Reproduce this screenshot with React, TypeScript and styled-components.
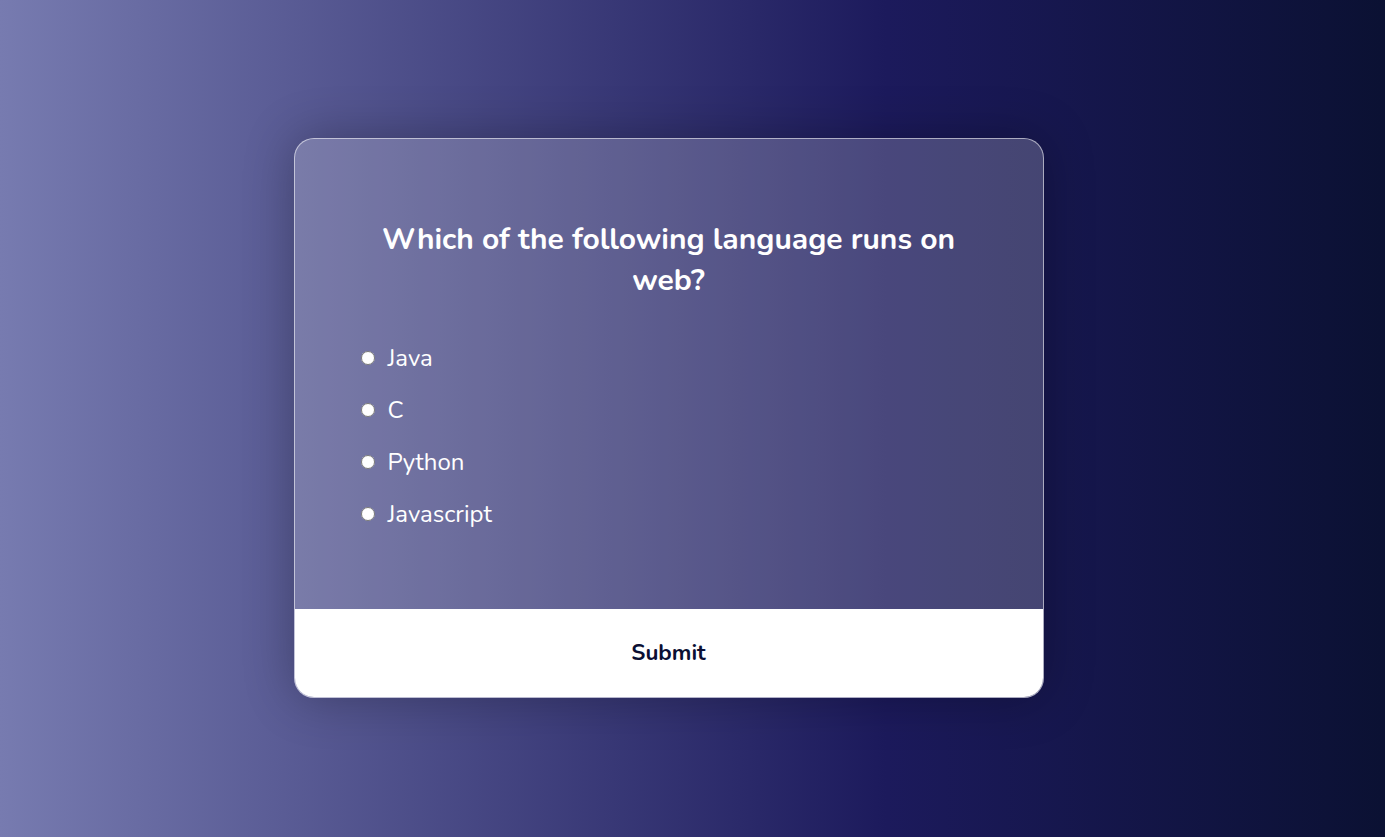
import React, { useState } from "react";
import styled, { createGlobalStyle } from "styled-components";

const GlobalStyle = createGlobalStyle`
  * { box-sizing: border-box; }
  html, body { margin: 0; padding: 0; }
  body {
    font-family: "Nunito", "Lato", "Noto Sans", sans-serif;
    background: linear-gradient(90deg, #777bb0 0%, #1c1a5c 64%, #0b1133 100%);
    min-height: 100vh;
  }
`;

const Page = styled.main`
  min-height: 100vh;
  display: flex;
  align-items: center;
  justify-content: center;
  padding: 0 48px 1px 0;
`;

const Card = styled.section`
  width: 750px;
  height: 560px;
  border-radius: 20px;
  border: 1px solid rgba(255, 255, 255, 0.55);
  background: rgba(255, 255, 255, 0.2);
  box-shadow: 0 0 50px rgba(0, 0, 0, 0.28);
  overflow: hidden;
  display: flex;
  flex-direction: column;
  color: #fff;
`;

const Body = styled.div`
  flex: 1;
  padding: 80px 64px 0;
`;

const Question = styled.h2`
  margin: 0 0 31px;
  text-align: center;
  font-size: 30px;
  font-weight: 700;
  line-height: 41px;
  color: #fff;
`;

const Options = styled.ul`
  list-style: none;
  margin: 0;
  padding: 0;
  display: flex;
  flex-direction: column;
`;

const Option = styled.li`
  height: 52px;
  display: flex;
  align-items: center;
  font-size: 24px;
`;

const Label = styled.label`
  display: flex;
  align-items: center;
  cursor: pointer;
`;

const Radio = styled.input`
  width: 14px;
  height: 14px;
  margin: 0 13px 0 2px;
`;

const SubmitButton = styled.button`
  height: 88px;
  flex-shrink: 0;
  width: 100%;
  border: none;
  background: #fff;
  color: #0b0f33;
  font-family: inherit;
  font-size: 22.4px;
  font-weight: 700;
  padding-bottom: 2px;
  cursor: pointer;
`;

const options = ["Java", "C", "Python", "Javascript"];

export default function App() {
  const [selected, setSelected] = useState<string | null>(null);
  return (
    <>
      <GlobalStyle />
      <Page>
        <Card>
          <Body>
            <Question>Which of the following language runs on web?</Question>
            <Options>
              {options.map((o) => (
                <Option key={o}>
                  <Label>
                    <Radio
                      type="radio"
                      name="answer"
                      checked={selected === o}
                      onChange={() => setSelected(o)}
                    />
                    {o}
                  </Label>
                </Option>
              ))}
            </Options>
          </Body>
          <SubmitButton>Submit</SubmitButton>
        </Card>
      </Page>
    </>
  );
}
